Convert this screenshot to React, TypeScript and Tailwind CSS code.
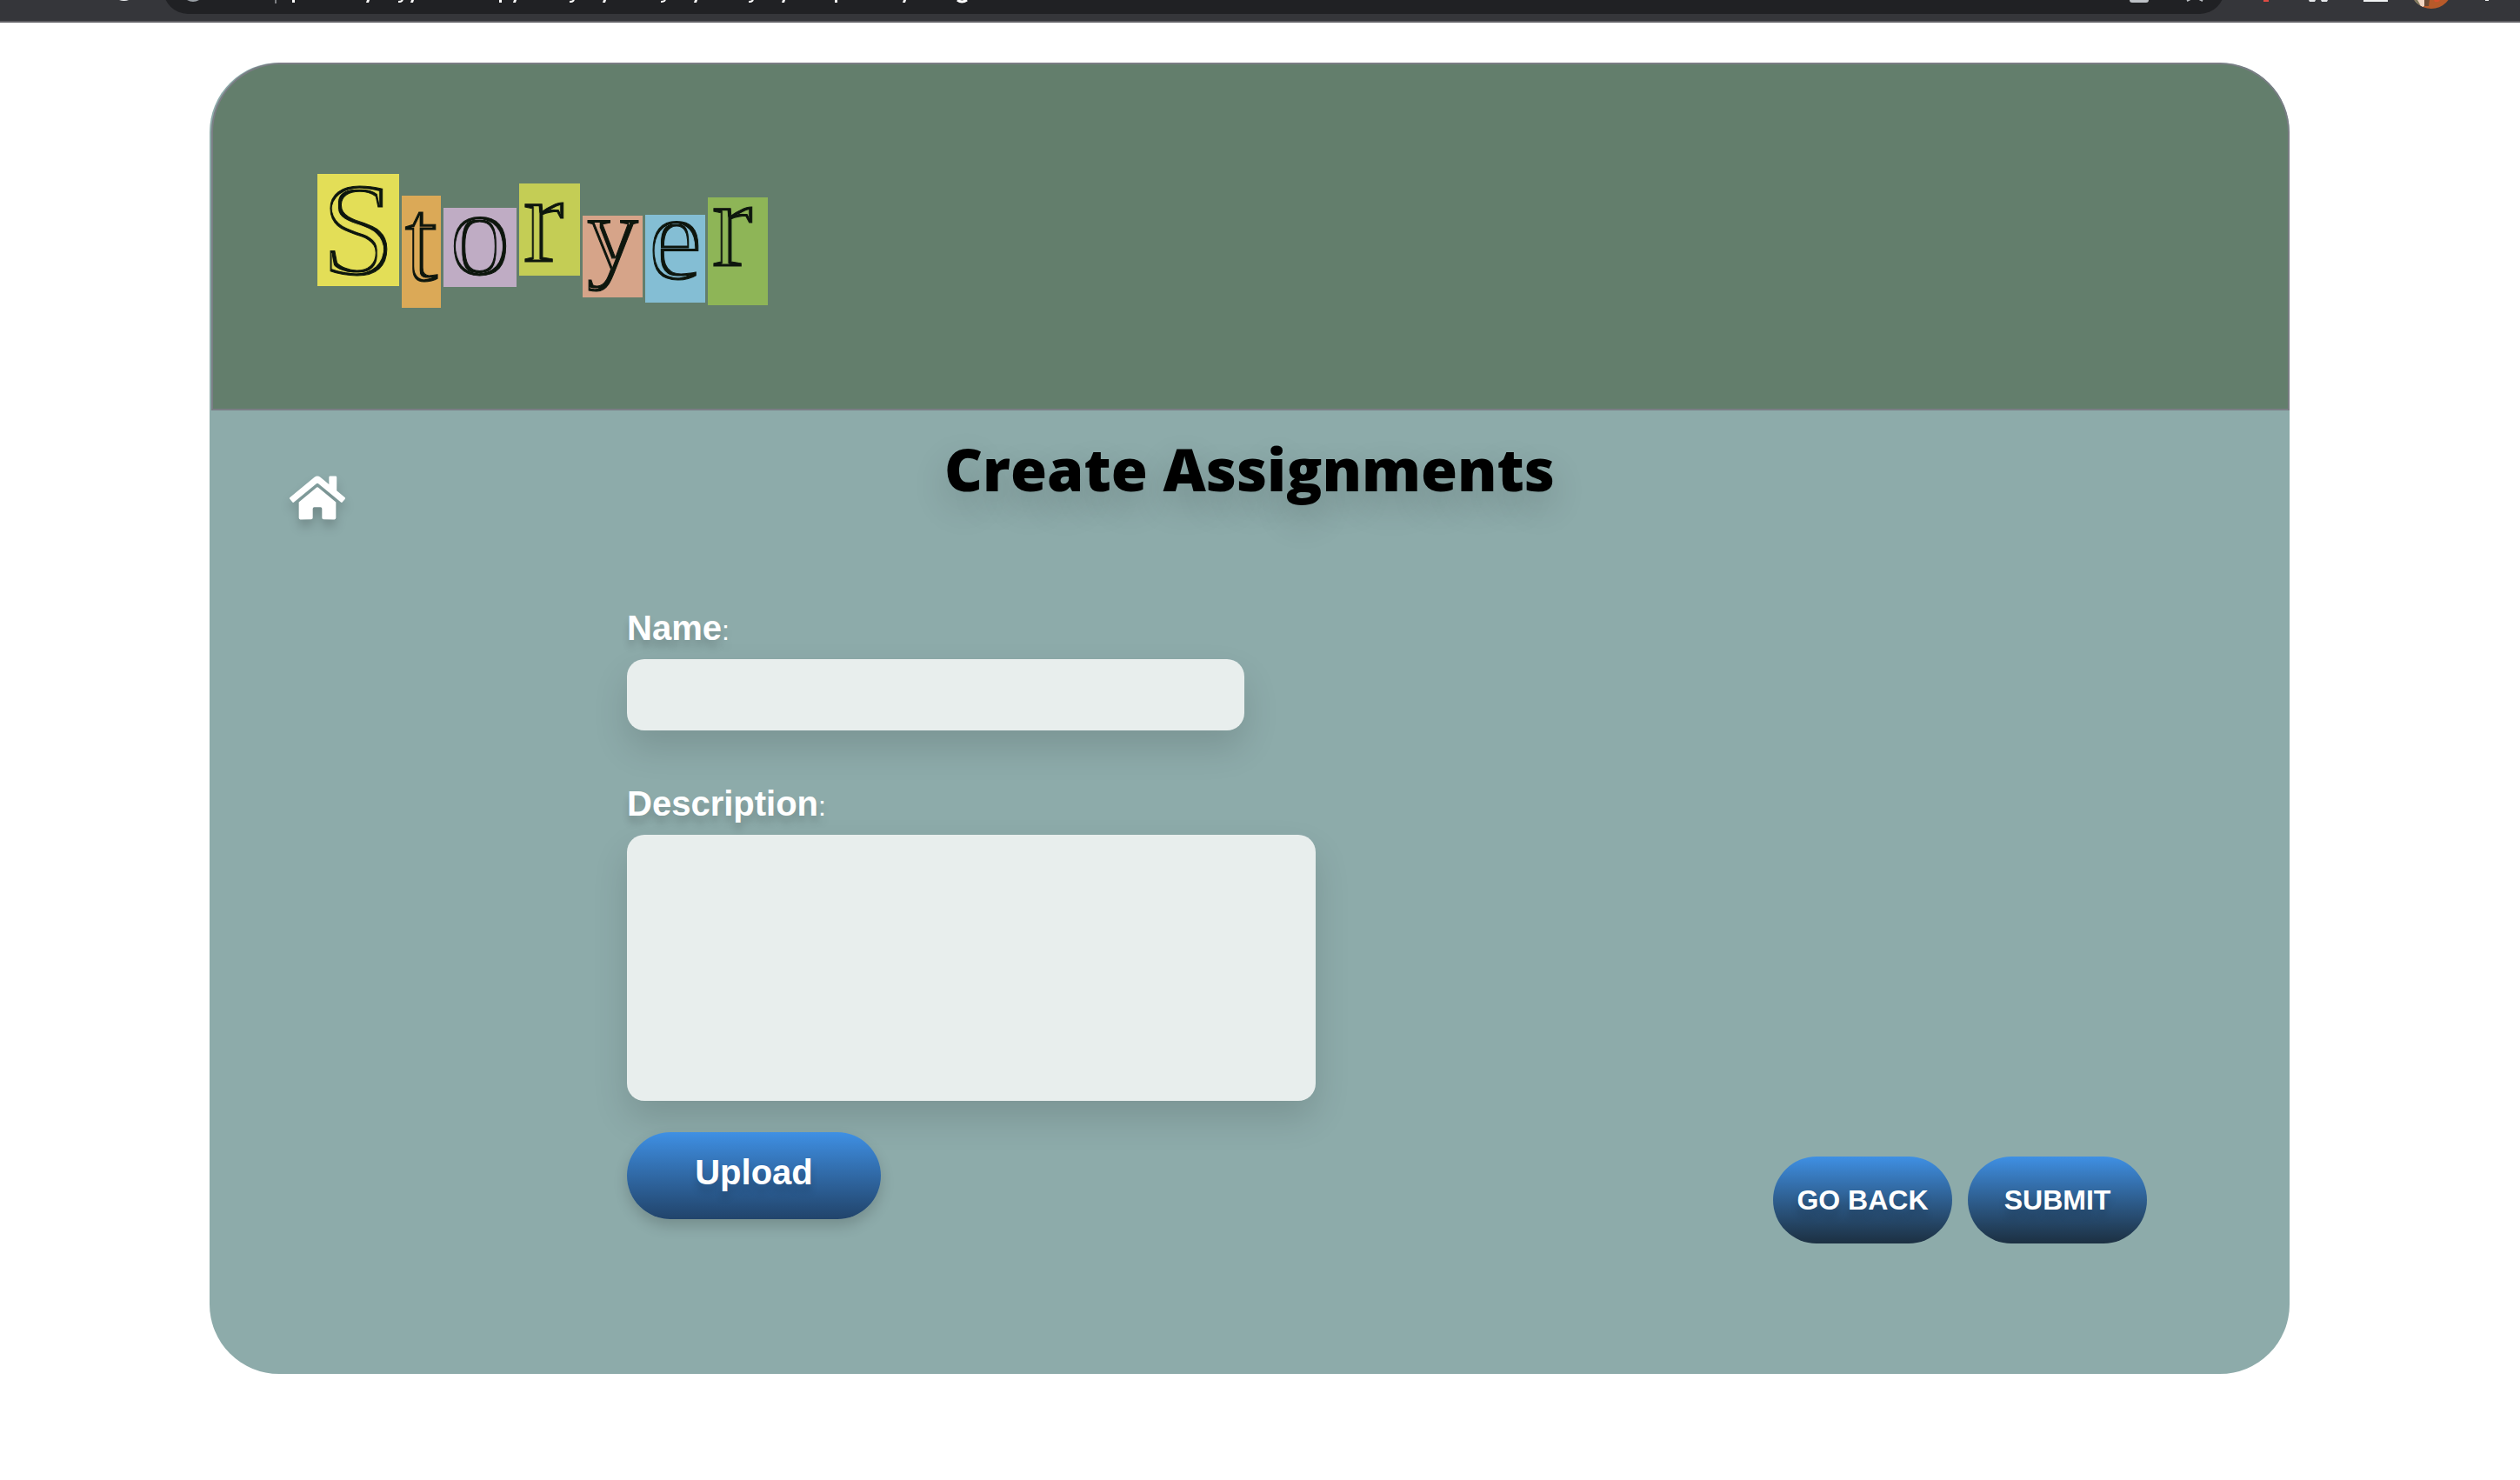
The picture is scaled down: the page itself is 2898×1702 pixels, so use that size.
import { FaHome } from "react-icons/fa";

const tiles = [
  { letter: "S", className: "w-[94px] h-[129px] mt-0 justify-center bg-[#e3de57] text-[152px] leading-[130px]" },
  { letter: "t", className: "w-[45px] h-[129px] mt-[25px] justify-center bg-[#dba957] text-[140px] leading-[102px]" },
  { letter: "o", className: "w-[84px] h-[91px] mt-[39px] justify-center bg-[#bfacc4] text-[140px] leading-[59px]" },
  { letter: "r", className: "w-[70px] h-[106px] mt-[11px] pl-1 bg-[#c4cd55] text-[144px] leading-[84px]" },
  { letter: "y", className: "w-[69px] h-[94px] mt-[48px] justify-center bg-[#d6a489] text-[120px] leading-[42px]" },
  { letter: "e", className: "w-[69px] h-[101px] mt-[47px] justify-center bg-[#84bed4] text-[140px] leading-[53px]" },
  { letter: "r", className: "w-[69px] h-[124px] mt-[27px] pl-1 bg-[#8eb557] text-[144px] leading-[62px]" },
];

function Logo() {
  return (
    <div className="flex items-start gap-[3px] font-['Liberation_Serif',serif] text-[#0f1511]">
      {/* Carves the thick strokes so the letters read as an inline face */}
      <svg className="absolute size-0" aria-hidden="true">
        <filter id="inline-face" x="-30%" y="-150%" width="160%" height="400%">
          <feMorphology in="SourceAlpha" operator="erode" radius="3 3" result="core" />
          <feOffset in="core" dx="-1" dy="0" result="shifted" />
          <feComposite in="SourceGraphic" in2="shifted" operator="out" />
        </filter>
      </svg>
      {tiles.map((tile, i) => (
        <div key={i} className={`flex ${tile.className}`}>
          <span className="block [-webkit-text-stroke:1px_#0f1511] [filter:url(#inline-face)]">{tile.letter}</span>
        </div>
      ))}
    </div>
  );
}

function BrowserBar() {
  const stems = [336, 574, 960];
  const slants = [421, 472, 590, 693, 798, 899, 1038];
  const hooks = [457, 654, 759, 860];
  return (
    <div className="flex h-[26px] items-end overflow-hidden border-b-2 border-[#5f5e63] bg-[#35363a] pb-2" aria-hidden="true">
      <svg className="h-4 w-[188px] shrink-0" viewBox="0 0 188 16">
        <path d="M137 0h11q-5 2-11 0z" fill="#f1f3f4" />
      </svg>
      <div className="flex h-14 flex-1 items-end justify-between overflow-hidden rounded-full bg-[#202124]">
        <svg className="h-4 w-[1000px]" viewBox="188 0 1000 16">
          <path d="M215 0h14q-7 4-14 0z" fill="#9aa0a6" />
          <rect x="316" y="0" width="2" height="4" fill="#7d7f83" />
          {stems.map((x) => (
            <rect key={x} x={x} y="0" width="3" height="3" fill="#fff" />
          ))}
          {slants.map((x) => (
            <path key={x} d={`M${x + 1} 0h3l-1 3h-3z`} fill="#fff" />
          ))}
          {hooks.map((x) => (
            <path key={x} d={`M${x + 6} 0q-1 2-5 2`} fill="none" stroke="#fff" strokeWidth="2" />
          ))}
          <path d="M1101 0q5 4 11 0" fill="none" stroke="#fff" strokeWidth="3" />
        </svg>
        <svg className="h-4 w-[120px]" viewBox="2438 0 120 16">
          <path d="M2449 0h22q0 3-3 3h-16q-3 0-3-3z" fill="#bdc1c6" />
          <path d="M2515 1l4-2M2533 1l-4-2" stroke="#bdc1c6" strokeWidth="2" />
        </svg>
      </div>
      <svg className="h-4 w-[340px] shrink-0" viewBox="2558 0 340 16">
        <rect x="2603" y="0" width="6" height="2" fill="#e04b43" />
        <path d="M2655 0h8l-1 2h-6zM2669 0h8l-1 2h-6z" fill="#e8eaed" />
        <rect x="2718" y="0" width="28" height="2" fill="#f1f3f4" />
        <clipPath id="avatar">
          <circle cx="2796" cy="-14" r="24" />
        </clipPath>
        <g clipPath="url(#avatar)">
          <rect x="2770" y="0" width="50" height="12" fill="#b75a2a" />
          <path d="M2770 0h18l-1 8h-17z" fill="#e8cdb8" />
          <path d="M2776 0h4l6 10h-8z" fill="#7d7a5e" />
          <path d="M2781 0h7l0 7h-4z" fill="#f0d5c2" />
          <path d="M2788 0h6l-1 7h-5z" fill="#6b4a34" />
          <path d="M2799 0h7l-2 2h-4z" fill="#d9502c" />
        </g>
        <rect x="2858" y="0" width="4" height="1" fill="#f1f3f4" />
      </svg>
    </div>
  );
}

const label = "block text-[40px] leading-[48px] font-bold text-white [text-shadow:0_8px_8px_rgba(0,0,0,0.17)]";
const colon = "text-[32px] leading-none font-normal";
const field =
  "block resize-none rounded-[20px] bg-[#e8eeed] px-6 text-[32px] text-black outline-none shadow-[0_20px_40px_rgba(0,0,0,0.13)]";
const action =
  "h-[100px] w-[206px] rounded-full bg-linear-to-b from-[#3f90e4] to-[#1c3042] text-[32px] font-bold whitespace-nowrap text-white [text-shadow:0_8px_8px_rgba(0,0,0,0.17)]";

export default function App() {
  return (
    <div className="min-h-screen bg-white font-['Liberation_Sans',Arial,sans-serif]">
      <BrowserBar />
      <main className="pt-[46px] pr-[265px] pb-[120px] pl-[241px]">
        <div className="overflow-hidden rounded-[80px] bg-[#8dabaa]">
          <header className="ml-[2px] h-[400px] rounded-t-[80px] border-2 border-[#7a7d84] bg-[#637e6c] pt-[126px] pl-[120px]">
            <Logo />
          </header>

          <div className="grid grid-cols-[64px_1fr_64px] items-start px-[92px] pt-7">
            <a href="#home" aria-label="Home" className="mt-11 text-white">
              <FaHome className="h-[57px] w-16 [filter:drop-shadow(0_8px_6px_rgba(0,0,0,0.18))]" />
            </a>
            <h1 className="text-center font-['Open_Sans',sans-serif] text-[68px] leading-[78px] font-extrabold text-black [text-shadow:0_16px_40px_rgba(0,0,0,0.2)]">
              Create Assignments
            </h1>
          </div>

          <form className="flex items-end justify-between pt-[97px] pr-[164px] pb-[150px] pl-[480px]">
            <div className="pb-7">
              <label htmlFor="name" className={label}>
                Name<span className={colon}>:</span>
              </label>
              <input id="name" type="text" className={`mt-3 h-[82px] w-[710px] ${field}`} />
              <label htmlFor="description" className={`mt-[60px] ${label}`}>
                Description<span className={colon}>:</span>
              </label>
              <textarea id="description" className={`mt-3 h-[306px] w-[792px] py-4 ${field}`} />
              <button
                type="button"
                className="mt-9 block h-[100px] w-[292px] rounded-full bg-linear-to-b from-[#3f90e4] to-[#21446b] pb-2 text-[40px] font-bold text-white shadow-[0_8px_16px_rgba(0,0,0,0.17)] [text-shadow:0_8px_8px_rgba(0,0,0,0.17)]"
              >
                Upload
              </button>
            </div>
            <div className="flex gap-[18px]">
              <button type="button" className={action}>GO BACK</button>
              <button type="submit" className={action}>SUBMIT</button>
            </div>
          </form>
        </div>
      </main>
    </div>
  );
}
